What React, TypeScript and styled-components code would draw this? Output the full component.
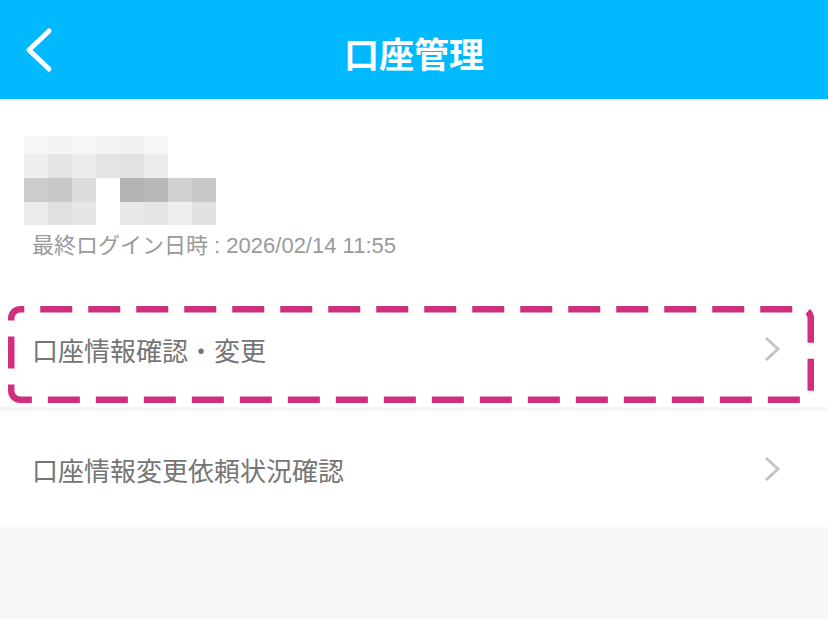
import React from 'react';
import styled, { createGlobalStyle } from 'styled-components';

const GlobalStyle = createGlobalStyle`
  html, body {
    margin: 0;
    padding: 0;
    background: #f7f8fa;
  }
  body {
    font-family: "Liberation Sans", "Noto Sans CJK JP", sans-serif;
  }
`;

const Page = styled.div`
  width: 828px;
  min-height: 619px;
  background: #f7f8fa;
`;

const Header = styled.header`
  height: 99px;
  background: #00b9ff;
  display: grid;
  grid-template-columns: 1fr auto 1fr;
  align-items: center;
`;

const BackButton = styled.button`
  justify-self: start;
  margin-left: 24px;
  padding: 0;
  border: none;
  background: none;
  display: flex;
  align-items: center;
  cursor: pointer;
`;

const Title = styled.h1`
  margin: 0;
  padding-top: 6px;
  font-family: "Noto Sans CJK JP", sans-serif;
  font-size: 35px;
  font-weight: 700;
  line-height: 1;
  color: #fff;
`;

const Profile = styled.section`
  background: #fff;
  padding: 37px 24px 33px;
  display: flex;
  flex-direction: column;
`;

const Mosaic = styled.div`
  display: grid;
  grid-template-columns: repeat(8, 24px);
  grid-template-rows: 18px 24px 24px 23px;
`;

const Cell = styled.div<{ $tone: string | null }>`
  background: ${(p) => p.$tone ?? 'transparent'};
`;

const LastLogin = styled.p`
  margin: 8px 0 0 8px;
  font-size: 22px;
  line-height: 25px;
  color: #9a9a9a;
`;

const MenuList = styled.ul`
  margin: 0;
  padding: 0;
  list-style: none;
  display: flex;
  flex-direction: column;
  gap: 4px;
  background: #f4f5f7;
`;

const MenuRow = styled.li`
  position: relative;
  height: 116px;
  background: #fff;
  padding: 0 48px 0 32px;
  display: flex;
  align-items: center;
  justify-content: space-between;
  cursor: pointer;
`;

const MenuLabel = styled.span`
  font-family: "Noto Sans CJK JP", sans-serif;
  font-size: 26px;
  color: #757575;
`;

const Highlight = styled.svg`
  position: absolute;
  left: 8px;
  top: 15px;
  pointer-events: none;
`;

const tones: (string | null)[][] = [
  ['#f7f7f7', '#f3f3f3', '#f6f6f6', '#f2f2f2', '#f0f0f0', '#f6f6f6', null, null],
  ['#efefef', '#e5e5e5', '#ececec', '#e4e4e4', '#e2e2e2', '#ececec', null, null],
  ['#cccccc', '#c8c8c8', '#dcdcdc', null, '#b3b3b3', '#b8b8b8', '#d1d1d1', '#c8c8c8'],
  ['#ebebeb', '#e0e0e0', '#e6e6e6', null, '#e8e8e8', '#e5e5e5', '#eeeeee', '#e1e1e1'],
];

const BackIcon = () => (
  <svg width="30" height="46" viewBox="0 0 30 46">
    <polyline
      points="25,4 5,23 25,42"
      fill="none"
      stroke="#fff"
      strokeWidth="5"
      strokeLinecap="round"
      strokeLinejoin="round"
    />
  </svg>
);

const ChevronIcon = () => (
  <svg width="16" height="26" viewBox="0 0 16 26">
    <polyline
      points="2,2 14,13 2,24"
      fill="none"
      stroke="#c4c4c4"
      strokeWidth="3"
    />
  </svg>
);

const items = [
  { label: '口座情報確認・変更', highlighted: true },
  { label: '口座情報変更依頼状況確認', highlighted: false },
];

const App = () => {
  return (
    <Page>
      <GlobalStyle />
      <Header>
        <BackButton aria-label="戻る">
          <BackIcon />
        </BackButton>
        <Title>口座管理</Title>
        <span />
      </Header>

      <Profile>
        <Mosaic>
          {tones.flat().map((t, i) => (
            <Cell key={i} $tone={t} />
          ))}
        </Mosaic>
        <LastLogin>最終ログイン日時 : 2026/02/14 11:55</LastLogin>
      </Profile>

      <MenuList>
        {items.map((item) => (
          <MenuRow key={item.label}>
            <MenuLabel>{item.label}</MenuLabel>
            <ChevronIcon />
            {item.highlighted && (
              <Highlight width="806" height="97" viewBox="0 0 806 97">
                <rect
                  x="3.25"
                  y="3.25"
                  width="799.5"
                  height="90.5"
                  rx="9"
                  fill="none"
                  stroke="#d22e7e"
                  strokeWidth="6.5"
                  strokeDasharray="32 16"
                  strokeDashoffset="-20"
                />
              </Highlight>
            )}
          </MenuRow>
        ))}
      </MenuList>
    </Page>
  );
};

export default App;
